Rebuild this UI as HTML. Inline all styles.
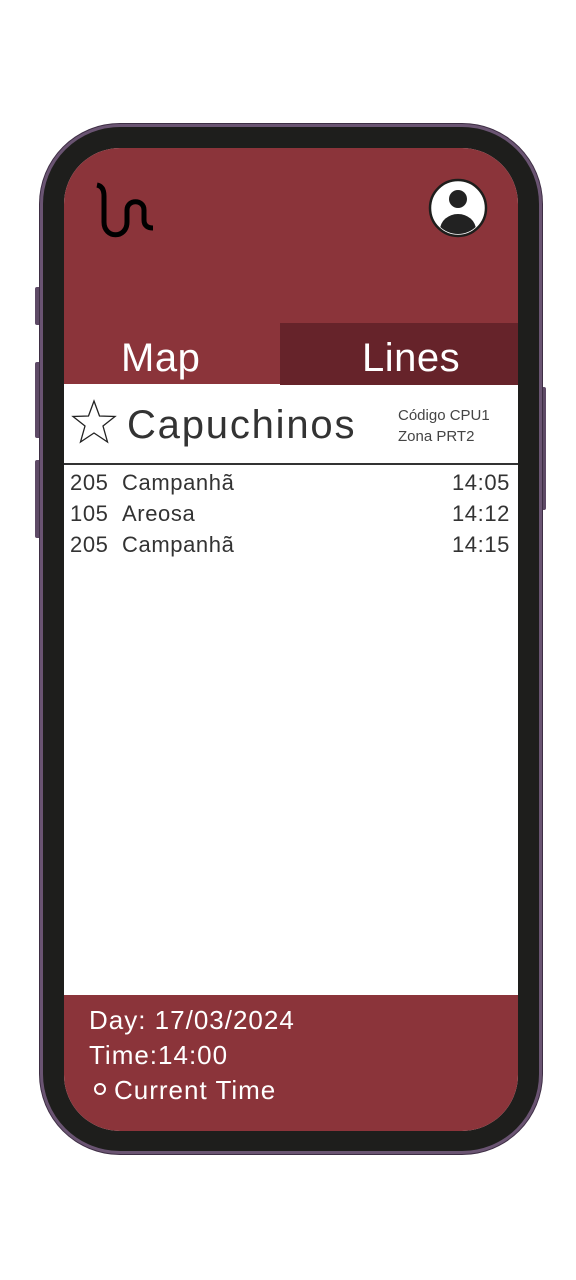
<!DOCTYPE html>
<html><head><style>
*{margin:0;padding:0;box-sizing:border-box}
body{width:576px;height:1280px;background:#fff;position:relative;overflow:hidden;font-family:"Liberation Sans",sans-serif}
.abs{position:absolute}
.btn{position:absolute;background:#5e4a66;border-radius:2px}
.frame{left:40px;top:124px;width:502px;height:1030px;border-radius:80px;background:#1e1e1c;border:3px solid #6a5472;box-shadow:0 0 0 1px #3e2e44}
.screen{left:64px;top:148px;width:454px;height:983px;border-radius:56px;overflow:hidden;background:#fff}
.hdr{left:0;top:0;width:454px;height:236px;background:#8b343a}
.tab{left:216px;top:175px;width:238px;height:62px;background:#66232a}
.t{color:#fff;font-size:40px;font-weight:300;letter-spacing:0.5px}
.row{font-size:22px;color:#333;left:6px;width:440px;letter-spacing:0.6px}
.row span{position:absolute}
.foot{left:0;top:847px;width:454px;height:136px;background:#8b343a;color:#fff;font-size:26px;letter-spacing:1px}
</style></head><body>
<div class="btn" style="left:35px;top:287px;width:6px;height:38px"></div>
<div class="btn" style="left:35px;top:362px;width:6px;height:76px"></div>
<div class="btn" style="left:35px;top:460px;width:6px;height:78px"></div>
<div class="btn" style="left:540px;top:387px;width:6px;height:123px"></div>
<div class="abs frame"></div>
<div class="abs screen">
 <div class="abs hdr"></div>
 <div class="abs tab"></div>
 <svg class="abs" style="left:30px;top:34px" width="66" height="60" viewBox="0 0 66 60">
  <path d="M3 3 C8 4 10 8 10 14 L10 40 C10 57 33 57 33 40 L33 28 C33 17 50 17 50 28 L50 38 C50 44 54 46 59 46" fill="none" stroke="#000" stroke-width="5"/>
 </svg>
 <svg class="abs" style="left:364px;top:30px" width="60" height="60" viewBox="0 0 60 60">
  <defs><clipPath id="c"><circle cx="30" cy="30" r="26"/></clipPath></defs>
  <circle cx="30" cy="30" r="28" fill="#fff" stroke="#1e1e1c" stroke-width="2.5"/>
  <circle cx="30" cy="21" r="9" fill="#222"/>
  <ellipse cx="30" cy="52" rx="18" ry="16" fill="#222" clip-path="url(#c)"/>
 </svg>
 <div class="abs t" style="left:57px;top:188px">Map</div>
 <div class="abs t" style="left:298px;top:188px">Lines</div>
 <svg class="abs" style="left:6px;top:251px" width="48" height="46" viewBox="0 0 48 46">
  <path d="M24 2 L29.5 17 L45 17.5 L33 27 L37.5 43 L24 34 L10.5 43 L15 27 L3 17.5 L18.5 17 Z" fill="none" stroke="#222" stroke-width="1.3"/>
 </svg>
 <div class="abs" style="left:63px;top:255px;font-size:40px;color:#333;letter-spacing:1.8px">Capuchinos</div>
 <div class="abs" style="left:334px;top:257px;font-size:15px;color:#444;line-height:21px">Código CPU1<br>Zona PRT2</div>
 <div class="abs" style="left:0;top:315px;width:454px;height:2px;background:#333"></div>
 <div class="abs row" style="top:322px"><span style="left:0">205</span><span style="left:52px">Campanhã</span><span style="right:0">14:05</span></div>
 <div class="abs row" style="top:353px"><span style="left:0">105</span><span style="left:52px">Areosa</span><span style="right:0">14:12</span></div>
 <div class="abs row" style="top:384px"><span style="left:0">205</span><span style="left:52px">Campanhã</span><span style="right:0">14:15</span></div>
 <div class="abs foot">
  <div class="abs" style="left:25px;top:10px">Day: 17/03/2024</div>
  <div class="abs" style="left:25px;top:45px">Time:14:00</div>
  <div class="abs" style="left:30px;top:88px;width:12px;height:12px;border:2px solid #fff;border-radius:50%"></div>
  <div class="abs" style="left:50px;top:80px">Current Time</div>
 </div>
</div>
</body></html>
